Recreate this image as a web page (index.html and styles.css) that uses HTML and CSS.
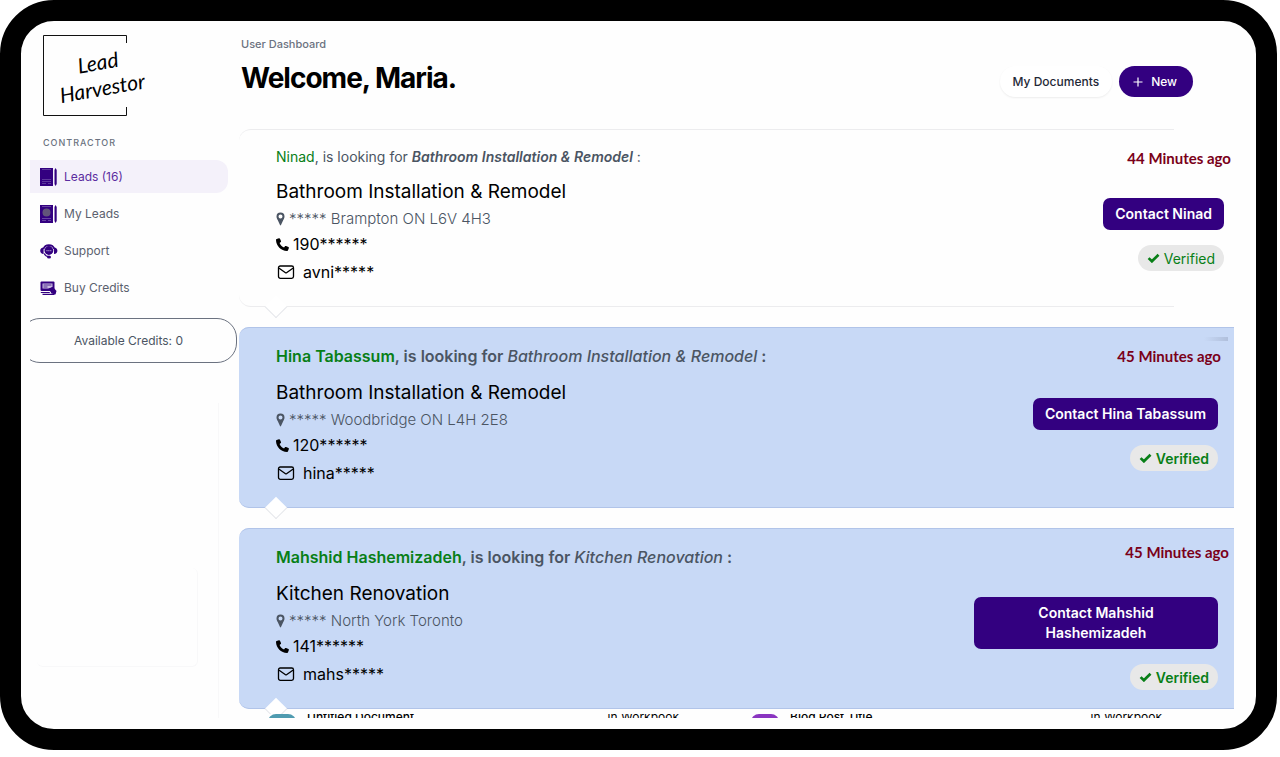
FILE: index.html
```html
<!DOCTYPE html>
<html lang="en">
<head>
  <meta charset="UTF-8">
  <meta name="viewport" content="width=device-width, initial-scale=1.0">
  <title>Lead Harvestor</title>
  <link rel="stylesheet" href="styles.css">
</head>
<body>
  <!-- shared icons -->
  <svg class="sprite" aria-hidden="true">
    <symbol id="pin" viewBox="0 0 9 14">
      <path fill-rule="evenodd" d="M4.500 0.500a4 4 0 0 0-4 4c0 1.400.6 2.400 1.200 3.600L4 13c.2.500.8.500 1 0l2.300-4.900C7.900 6.900 8.500 5.900 8.500 4.500a4 4 0 0 0-4-4zM4.500 2.500a2 2 0 1 1 0 4 2 2 0 0 1 0-4z"/>
    </symbol>
    <symbol id="phone" viewBox="0 0 12 12">
      <path d="M2.700 0.200 0.600 0.900C0.200 1 0 1.300 0 1.800 0.200 7.400 4.600 11.800 10.200 12c.5 0 .8-.2.900-.6l.8-2.100c.1-.4 0-.7-.4-.9L9.300 7.400c-.4-.2-.7-.1-1 .2l-.9 1.100C5.600 7.900 4.100 6.400 3.300 4.600l1.100-.9c.3-.3.400-.6.2-1L3.700.6C3.500.2 3.100 0 2.700.2z"/>
    </symbol>
    <symbol id="mail" viewBox="0 0 18 14">
      <g fill="none" stroke="currentColor" stroke-width="1.300" stroke-linejoin="round" stroke-linecap="round">
        <rect x="1.500" y="1" width="15" height="12.300" rx="1.800"/>
        <path d="M2.500 3.500 8.500 7.800q.5.300 1 0L15.500 3.500"/>
      </g>
    </symbol>
    <symbol id="check" viewBox="0 0 13 10">
      <path d="M1.600 5.100 4.900 8.300 11.500 1.800" fill="none" stroke="currentColor" stroke-width="2.700"/>
    </symbol>
  </svg>

  <div class="frame">
    <aside class="sidebar">
      <a class="logo" href="#">
        <svg class="logo-box" viewBox="0 0 84 81" aria-hidden="true">
          <path d="M83.500 8V.5H.5v80h83V72" fill="none" stroke="#111"/>
        </svg>
        <span class="logo-text">
          <span>Lead</span>
          <span>Harvestor</span>
        </span>
      </a>

      <nav class="menu">
        <p class="menu-title">Contractor</p>
        <a class="menu-item active" href="#">
          <svg width="18" height="18" viewBox="0 0 18 18" aria-hidden="true">
            <rect width="13" height="18" fill="#330080"/>
            <path d="M2 1.500h9M2 11.500h9M2 13.500h9M2 15.500h4M8 15.500h3" stroke="#8b72b8" stroke-width=".5"/>
            <path d="M14.500 2 15.500 0l1.200 2v14l-1.200 2-1-2z" fill="#330080"/>
          </svg>
          Leads (16)
        </a>
        <a class="menu-item" href="#">
          <svg width="18" height="18" viewBox="0 0 18 18" aria-hidden="true">
            <rect width="13" height="18" fill="#330080"/>
            <path d="M2 1.500h9M2 13.500h9M2 15.500h4M8 15.500h3" stroke="#8b72b8" stroke-width=".6"/>
            <circle cx="6.500" cy="7.500" r="4" fill="#62547a"/>
            <path d="M14.500 2 15.500 0l1.200 2v14l-1.200 2-1-2z" fill="#330080"/>
          </svg>
          My Leads
        </a>
        <a class="menu-item" href="#">
          <svg width="18" height="18" viewBox="0 0 18 18" aria-hidden="true">
            <path d="M3.500 7a5.700 5.700 0 0 1 10.800 0" fill="none" stroke="#330080" stroke-width="1.800"/>
            <path d="M3.600 5.500v6.500C1.400 12 .2 10.700.2 8.800s1.200-3.300 3.400-3.300zM14 5.500v6.500c2.200 0 3.400-1.300 3.400-3.200S16.200 5.500 14 5.500z" fill="#330080"/>
            <circle cx="8.900" cy="8.500" r="4.400" fill="#330080"/>
            <path d="M6.500 8.700h1M8.400 8.700h1M10.300 8.700h1" stroke="#fff" stroke-width=".8"/>
            <path d="M4.200 11.500c.8 2 2.300 3 4.500 3.200" fill="none" stroke="#330080" stroke-width="1.200"/>
            <ellipse cx="9" cy="15" rx="2" ry="1.500" fill="#330080"/>
          </svg>
          Support
        </a>
        <a class="menu-item" href="#">
          <svg width="18" height="18" viewBox="0 0 18 18" aria-hidden="true">
            <rect x=".5" y="2.500" width="14" height="9.500" rx="1" fill="#330080"/>
            <path d="M2.500 4.500h10V8l-3 1.500h-7z" fill="#c9bde0"/>
            <path d="M3.500 6h8M3.500 8h4" stroke="#330080" stroke-width=".8"/>
            <path d="M8.500 9.500 13 8l3.500 4-1 3.500-4-1z" fill="#330080"/>
            <path d="M.8 13.500h9M2.500 15.300h12" stroke="#330080" stroke-width="1.200"/>
          </svg>
          Buy Credits
        </a>
        <div class="credits">Available Credits: 0</div>
      </nav>

      <div class="sidebar-rest">
        <div class="empty-panel"></div>
      </div>
    </aside>

    <main class="content">
      <header class="top">
        <div>
          <p class="crumb">User Dashboard</p>
          <h1>Welcome, Maria.</h1>
        </div>
        <div class="actions">
          <button class="btn-docs" type="button">My Documents</button>
          <button class="btn-new" type="button">
            <svg width="10" height="10" viewBox="0 0 10 10" aria-hidden="true">
              <path d="M5 .5v9M.5 5h9" stroke="currentColor" stroke-width="1.200"/>
            </svg>
            New
          </button>
        </div>
      </header>

      <article class="lead">
        <div class="lead-info">
          <p class="request"><span class="name">Ninad</span>, is looking for <em>Bathroom Installation &amp; Remodel</em> :</p>
          <h2>Bathroom Installation &amp; Remodel</h2>
          <p class="address"><svg class="icon-pin"><use href="#pin"/></svg>***** Brampton ON L6V 4H3</p>
          <p class="phone"><svg class="icon-phone"><use href="#phone"/></svg>190******</p>
          <p class="email"><svg class="icon-mail"><use href="#mail"/></svg>avni*****</p>
        </div>
        <div class="lead-side">
          <time>44 Minutes ago</time>
          <button class="btn-contact" type="button">Contact Ninad</button>
          <span class="verified"><svg class="icon-check"><use href="#check"/></svg>Verified</span>
        </div>
      </article>

      <article class="lead unread recent">
        <div class="lead-info">
          <p class="request"><span class="name">Hina Tabassum</span>, is looking for <em>Bathroom Installation &amp; Remodel</em> :</p>
          <h2>Bathroom Installation &amp; Remodel</h2>
          <p class="address"><svg class="icon-pin"><use href="#pin"/></svg>***** Woodbridge ON L4H 2E8</p>
          <p class="phone"><svg class="icon-phone"><use href="#phone"/></svg>120******</p>
          <p class="email"><svg class="icon-mail"><use href="#mail"/></svg>hina*****</p>
        </div>
        <div class="lead-side">
          <time>45 Minutes ago</time>
          <button class="btn-contact" type="button">Contact Hina Tabassum</button>
          <span class="verified"><svg class="icon-check"><use href="#check"/></svg>Verified</span>
        </div>
      </article>

      <article class="lead unread long-name">
        <div class="lead-info">
          <p class="request"><span class="name">Mahshid Hashemizadeh</span>, is looking for <em>Kitchen Renovation</em> :</p>
          <h2>Kitchen Renovation</h2>
          <p class="address"><svg class="icon-pin"><use href="#pin"/></svg>***** North York Toronto</p>
          <p class="phone"><svg class="icon-phone"><use href="#phone"/></svg>141******</p>
          <p class="email"><svg class="icon-mail"><use href="#mail"/></svg>mahs*****</p>
        </div>
        <div class="lead-side">
          <time>45 Minutes ago</time>
          <button class="btn-contact" type="button">Contact Mahshid Hashemizadeh</button>
          <span class="verified"><svg class="icon-check"><use href="#check"/></svg>Verified</span>
        </div>
      </article>

      <section class="documents">
        <div class="document">
          <span class="dot teal"></span>
          <span class="doc-name">Untitled Document</span>
          <span>in Workbook</span>
        </div>
        <div class="document">
          <span class="dot purple"></span>
          <span class="doc-name">Blog Post Title</span>
          <span>in Workbook</span>
        </div>
      </section>
    </main>
  </div>
</body>
</html>
```
FILE: styles.css
```css
* {
  box-sizing: border-box;
}

body {
  margin: 0;
  padding: 0 3px 7px 0;
  height: 100vh;
  background: #fff;
  color: #000;
  font-family: Inter, "Liberation Sans", sans-serif;
}

p, h1, h2 {
  margin: 0;
}

a {
  color: inherit;
  text-decoration: none;
}

button {
  border: none;
  font-family: inherit;
  cursor: pointer;
}

.sprite {
  display: none;
}

.frame {
  display: flex;
  height: 100%;
  border: 21px solid #000;
  border-radius: 54px;
  background: #fefefe;
  overflow: hidden;
}

/* sidebar */
.sidebar {
  display: flex;
  flex-direction: column;
  flex: 0 0 218px;
  padding: 14px 0 11px;
}

.logo {
  position: relative;
  width: 84px;
  height: 81px;
  margin-left: 22px;
}

.logo-box {
  display: block;
  width: 84px;
  height: 81px;
}

.logo-text {
  position: absolute;
  top: 14px;
  left: 10px;
  width: 94px;
  display: flex;
  flex-direction: column;
  align-items: center;
  font-family: Lato, sans-serif;
  font-size: 21px;
  font-style: italic;
  line-height: 26px;
  transform: rotate(-10deg);
}

.menu {
  display: flex;
  flex-direction: column;
  gap: 4px;
  margin-left: 9px;
  padding-top: 19px;
  overflow: hidden;
}

.menu-title {
  margin-bottom: 5px;
  padding-left: 13px;
  color: #6b7280;
  font-size: 9px;
  font-weight: 500;
  line-height: 16px;
  letter-spacing: 1px;
  text-transform: uppercase;
}

.menu-item {
  display: flex;
  align-items: center;
  gap: 6px;
  height: 33px;
  margin-right: 11px;
  padding-left: 10px;
  border-radius: 0 12px 12px 0;
  color: #5b616e;
  font-size: 12px;
}

.menu-item.active {
  background: #f4f1fa;
  color: #5b2ca0;
}

.credits {
  height: 45px;
  margin: 10px 2px 0 -10px;
  border: 1px solid #6b7280;
  border-radius: 20px;
  color: #4b5563;
  font-size: 12px;
  line-height: 43px;
  text-align: center;
}

.sidebar-rest {
  flex: 1;
  width: 198px;
  margin-top: 40px;
  padding: 165px 20px 0 16px;
  border-right: 1px solid #f8f8f9;
}

.empty-panel {
  height: 99px;
  border: solid #f8f8f9;
  border-width: 0 1px 1px 0;
  border-radius: 6px;
}

/* main area */
.content {
  flex: 1;
  min-width: 0;
  margin-bottom: 11px;
  padding-right: 22px;
  overflow: hidden;
}

.top {
  display: flex;
  justify-content: space-between;
  height: 108px;
  padding: 15px 41px 0 2px;
}

.crumb {
  color: #6b7280;
  font-size: 11px;
  font-weight: 500;
  line-height: 16px;
}

h1 {
  margin-top: 8px;
  font-size: 28px;
  font-weight: 700;
  line-height: 36px;
  letter-spacing: -1px;
}

.actions {
  display: flex;
  gap: 7px;
  height: 31px;
  margin-top: 30px;
}

.btn-docs,
.btn-new {
  padding: 0 13px;
  border-radius: 16px;
  font-size: 12px;
  font-weight: 500;
}

.btn-docs {
  background: #fff;
  color: #1f2937;
  box-shadow: 0 1px 2px rgba(0, 0, 0, 0.07);
}

.btn-new {
  display: flex;
  align-items: center;
  gap: 8px;
  padding: 0 16px 0 14px;
  background: #330080;
  color: #fff;
}

/* lead cards */
.lead {
  position: relative;
  display: flex;
  justify-content: space-between;
  margin-bottom: 20px;
  padding: 17px 10px 18px 37px;
}

.lead::before {
  content: "";
  position: absolute;
  inset: 0 60px 0 0;
  border: solid #ececee;
  border-width: 1px 0;
  border-radius: 12px 0 0 12px;
}

.lead::after {
  content: "";
  position: absolute;
  bottom: -8px;
  left: 29px;
  width: 15px;
  height: 15px;
  border: solid #e5e7eb;
  border-width: 0 1px 1px 0;
  background: #fff;
  transform: rotate(45deg);
}

.lead-info,
.lead-side {
  position: relative;
}

.unread {
  padding-right: 16px;
  background: #c8d9f6;
  border-radius: 10px 0 0 10px;
}

.unread::before {
  inset: 0;
  border-color: #b1c4e9;
  border-radius: 10px 0 0 10px;
}

/* soft shadow line above the time */
.recent {
  background: linear-gradient(to right, transparent, #b0bfdb) right 6px top 10px / 24px 4px no-repeat #c8d9f6;
}

.request {
  color: #4b5563;
  font-size: 14px;
  line-height: 21px;
}

.request em {
  font-weight: 600;
}

.name {
  color: #087f17;
}

.unread .request {
  font-size: 16px;
  font-weight: 600;
  line-height: 24px;
}

.unread .request em {
  font-weight: 500;
}

h2 {
  margin: 11px 0 1px;
  font-size: 19px;
  font-weight: 400;
  line-height: 28px;
}

.address,
.phone,
.email {
  display: flex;
  align-items: center;
}

.address {
  gap: 4px;
  color: #4b5563;
  font-size: 15px;
  font-weight: 300;
  line-height: 24px;
}

.phone {
  gap: 4px;
  font-size: 16px;
  line-height: 26px;
}

.email {
  gap: 8px;
  padding-left: 1px;
  font-size: 16px;
  line-height: 30px;
  margin-bottom: 2px;
}

.icon-pin,
.icon-phone,
.icon-mail,
.icon-check {
  fill: currentColor;
}

.icon-pin {
  width: 9px;
  height: 14px;
}

.icon-phone {
  width: 13px;
  height: 13px;
}

.icon-mail {
  width: 18px;
  height: 14px;
}

.icon-check {
  width: 13px;
  height: 10px;
}

.lead-side {
  display: flex;
  flex-direction: column;
  align-items: flex-end;
  padding-top: 2px;
}

time {
  margin: 0 -7px 30px 0;
  color: #7a0019;
  font-family: Lato, sans-serif;
  font-size: 15px;
  font-weight: 700;
  line-height: 20px;
}

.recent time {
  margin: 0 -3px 32px 0;
}

.long-name .lead-side {
  padding-top: 0;
}

.long-name time {
  margin: -3px -11px 35px 0;
}

.btn-contact {
  padding: 6px 12px;
  border-radius: 7px;
  background: #330080;
  color: #fff;
  font-size: 14px;
  font-weight: 600;
  line-height: 20px;
}

.long-name .btn-contact {
  max-width: 244px;
  padding: 6px 40px;
}

.verified {
  display: flex;
  align-items: center;
  gap: 4px;
  height: 26px;
  margin-top: 15px;
  padding: 0 9px;
  border-radius: 13px;
  background: #e8e8e8;
  color: #087f17;
  font-size: 14px;
}

.unread .verified {
  font-weight: 600;
}

/* strip of the document list that shows under the leads */
.documents {
  position: relative;
  z-index: 1;
  display: grid;
  grid-template-columns: 1fr 1fr;
  height: 5px;
  margin-top: -15px;
  padding-left: 29px;
  overflow: hidden;
  background: #fefefe;
  font-size: 12px;
  line-height: 6px;
}

.document {
  display: flex;
  gap: 11px;
  height: 5px;
  padding-right: 72px;
}

.doc-name {
  flex: 1;
  font-weight: 500;
}

.dot {
  flex: 0 0 28px;
  height: 28px;
  border-radius: 8px;
}

.teal {
  background: #4f9bb0;
}

.purple {
  background: #8a35c0;
}
```
